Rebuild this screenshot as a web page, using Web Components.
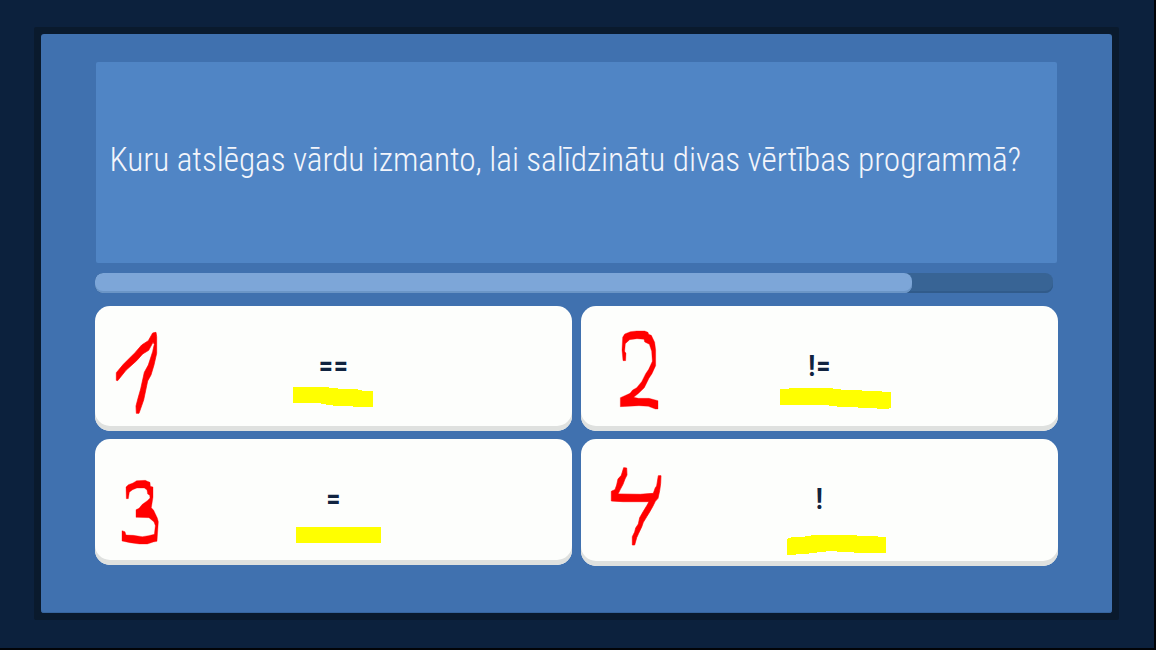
<!DOCTYPE html>
<html lang="lv">
<head>
<meta charset="utf-8">
<title>Viktorīna</title>
<style>
html,body{margin:0;height:100%;overflow:hidden;background:#0c213d}
</style>
</head>
<body>
<quiz-screen>
  <quiz-question slot="question">Kuru atslēgas vārdu izmanto, lai salīdzinātu divas vērtības programmā?</quiz-question>
  <quiz-progress slot="progress" style="--value:817px"></quiz-progress>
  <quiz-answer style="--lift:4px">==
    <svg slot="ink" viewBox="95 306 477 125"><g transform="translate(85 255) scale(.33333)"><path d="M203 234L213 232 215 245V295L207 330 198 360 188 378 176 435 162 475H154L153 453 159 430 167 402 178 352 190 330 203 290 208 268 204 262 191 286 173 297 155 317 123 346 98 377 94 376V353L115 328 150 293 170 270 190 257Z" fill="red" stroke="red" stroke-width="2"/></g><path d="M293 387H329V388H338V389H358V390H362V391H373V407H353V406H333V405H326V404H321V403H293Z" fill="#ff0"/></svg>
  </quiz-answer>
  <quiz-answer style="--lift:4px">!=
    <svg slot="ink" viewBox="581 306 477 125"><g transform="translate(560 295) scale(.33333)"><path d="M197 197H189L186 165 188 127 194 117 211 110 230 108H254L264 112 266 118 274 121 284 142 287 165V212L276 236 267 250 253 278 236 295 221 307 235 310H267L294 317V342H286L265 334 237 332 181 335V308L210 295 218 285 230 278 245 260 257 236 266 223 277 199 275 169 268 148 254 141 252 133 231 131 209 134 196 146 194 169 198 175Z" fill="red" stroke="red" stroke-width="1"/></g><path d="M780 389H789V388H833V389H841V390H862V391H882V392H891V408H889V409H877V408H858V407H837V406H829V405H780Z" fill="#ff0"/></svg>
  </quiz-answer>
  <quiz-answer>=
    <svg slot="ink" viewBox="95 439 477 125"><g transform="translate(85 430) scale(.33333)"><path d="M123 171L130 164 144 159 155 152 181 151 187 154 195 157 196 169 204 171V202L199 233 206 241 217 264 220 275 216 334 205 336 187 342H163L135 338 111 333V302L120 305 123 315 145 316 172 320 190 317 208 313 211 287 207 276 192 263 153 262V239L162 235 172 223 187 212 195 204 194 196 188 192 186 180 178 174H156L143 179 133 187 130 206H124Z" fill="red" stroke="red" stroke-width="1"/></g><path d="M296 527H381V543H296Z" fill="#ff0"/></svg>
  </quiz-answer>
  <quiz-answer style="margin-bottom:-1px;--lift:7px">!
    <svg slot="ink" viewBox="581 439 477 125"><g transform="translate(590 455) scale(.33333)"><path d="M101 38L110 39 111 60 105 72 99 88 91 103 84 117 151 118 190 115 196 98 200 93 205 62H213L212 85 209 107 204 130 196 139 188 155 179 171 171 184 160 202 155 216 146 235 140 248 134 270H127V245L134 231 137 219 145 207 149 188 160 169 171 151 177 140H99L64 138V109L75 104 80 90 84 72 94 61Z" fill="red" stroke="red" stroke-width="2"/></g><path d="M787 539H788V538H791V537H805V536H811V535H857V536H878V537H886V553H854V552H837V551H826V552H817V553H809V554H796V555H787Z" fill="#ff0"/></svg>
  </quiz-answer>
</quiz-screen>
<script>
const define = (name, markup) => {
  const template = document.createElement('template');
  template.innerHTML = markup;
  customElements.define(name, class extends HTMLElement {
    constructor() {
      super();
      this.attachShadow({mode: 'open'}).append(template.content.cloneNode(true));
    }
  });
};

define('quiz-screen', `<style>
  :host{display:block;box-sizing:border-box;width:1156px;height:650px;padding:27px 35px 27px 34px;background:#0c213d;border:solid #020408;border-width:0 2px 2px 0}
  main{box-sizing:border-box;width:1085px;height:593px;border:7px solid #0a1a2d;border-radius:2px;background:#0a1a2d}
  section{box-sizing:border-box;height:579px;padding:28px 54px 0;background:#4071af;border-radius:3px;box-shadow:inset 0 -1px #37659d}
  .answers{display:grid;grid-template-columns:477px 477px;grid-template-rows:125px 126px;gap:8px 9px;margin-top:13px}
</style><main><section><slot name="question"></slot><slot name="progress"></slot><div class="answers"><slot></slot></div></section></main>`);

define('quiz-question', `<style>
  :host{display:flex;align-items:center;box-sizing:border-box;width:961px;height:201px;margin-left:1px;padding:0 0 5px 13.5px;background:#5085c5;border-radius:2px;color:#f3f5fb;white-space:nowrap}
  span{font:355 33.3px/50px "Roboto Condensed",Roboto,sans-serif;font-stretch:75%;letter-spacing:-.06px}
</style><span><slot></slot></span>`);

define('quiz-progress', `<style>
  :host{display:block;width:958px;height:20px;margin-top:10px;border-radius:8px;background:#386495;box-shadow:inset 0 -2px #315b8b;overflow:hidden}
  div{width:var(--value);height:20px;border-radius:8px;background:#7da6d8;box-shadow:inset 0 -2px #6b95c6}
</style><div></div>`);

define('quiz-answer', `<style>
  :host{position:relative;display:flex;align-items:center;justify-content:center;box-sizing:border-box;padding-bottom:var(--lift,6px);border-radius:15px;background:#fdfefc;box-shadow:inset 0 -5px #dfe1df;color:#10233f;font:650 29.5px/35px "Roboto Condensed",Roboto,sans-serif;font-stretch:75%;letter-spacing:.4px}
  ::slotted(svg){position:absolute;inset:0;width:477px;height:125px}
</style><span><slot></slot></span><slot name="ink"></slot>`);
</script>
</body>
</html>
